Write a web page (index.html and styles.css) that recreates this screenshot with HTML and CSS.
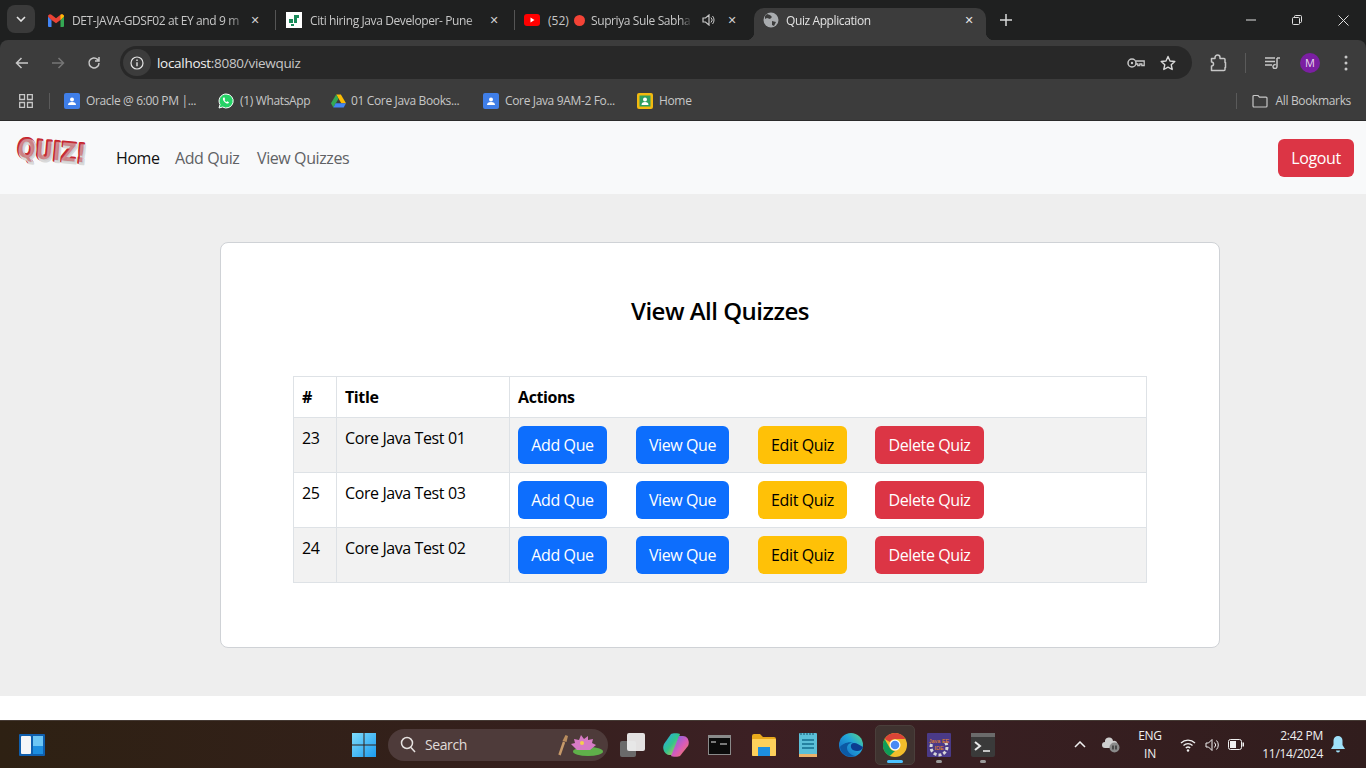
FILE: index.html
```html
<!DOCTYPE html>
<html lang="en">
<head>
<meta charset="utf-8">
<title>Quiz Application</title>
<link rel="stylesheet" href="styles.css">
</head>
<body>
<header class="browser">
  <div class="tabstrip">
    <button class="tab-search"><svg width="10" height="6" viewBox="0 0 10 6"><path d="M1 1l4 4 4-4" fill="none" stroke="#e3e3e3" stroke-width="1.6"/></svg></button>
    <div class="tab tab-a">
      <svg class="fav" width="16" height="13" viewBox="0 0 16 13"><path d="M0 2.500V12a1 1 0 0 0 1 1h2.500V6L0 2.500z" fill="#4285f4"/><path d="M16 2.500V12a1 1 0 0 1-1 1h-2.500V6L16 2.500z" fill="#34a853"/><path d="M0 2.500C0 .5 2 -.5 3.500 .7L8 4.200l4.500-3.500C14-.5 16 .5 16 2.500L12.500 6 8 9.300 3.500 6 0 2.500z" fill="#ea4335"/><path d="M12.500 .7C14-.5 16 .5 16 2.500L12.500 6V.7z" fill="#fbbc04"/></svg>
      <span class="tab-title">DET-JAVA-GDSF02 at EY and 9 m</span>
      <span class="tab-x">✕</span>
    </div>
    <i class="tab-sep"></i>
    <div class="tab tab-b">
      <svg class="fav" width="16" height="16" viewBox="0 0 16 16"><rect width="16" height="16" fill="#fff"/><path d="M3 7h4v4H3zM8 3h5v3h-2v5H8z" fill="#1a8a5a"/><path d="M5 12h3v2H5z" fill="#1a8a5a"/></svg>
      <span class="tab-title">Citi hiring Java Developer- Pune</span>
      <span class="tab-x">✕</span>
    </div>
    <i class="tab-sep"></i>
    <div class="tab tab-c">
      <svg class="fav" width="16" height="12" viewBox="0 0 16 12"><rect width="16" height="12" rx="3" fill="#f00"/><path d="M6.500 3.500v5l4-2.500z" fill="#fff"/></svg>
      <span class="tab-count">(52)</span>
      <i class="rec"></i>
      <span class="tab-title tab-title-c">Supriya Sule Sabha</span>
      <svg class="speaker" width="13" height="12" viewBox="0 0 13 12"><path d="M1 4v4h2.500L7 11V1L3.500 4z" fill="none" stroke="#c7c7c7" stroke-width="1.200"/><path d="M9 3.500a3.500 3.500 0 0 1 0 5M10.500 2a6 6 0 0 1 0 8" fill="none" stroke="#c7c7c7"/></svg>
      <span class="tab-x">✕</span>
    </div>
    <div class="tab tab-active">
      <svg class="fav fav-active" width="16" height="16" viewBox="0 0 16 16"><circle cx="8" cy="8" r="7.500" fill="#a9acaf"/><path d="M4 2l3 1 2 2-2 2-3-1-2 1V4zM9 9l4 1-2 4-2-1z" fill="#3c3c3c"/></svg>
      <span class="tab-title">Quiz Application</span>
      <span class="tab-x tab-x-active">✕</span>
    </div>
    <svg class="newtab" width="12" height="12" viewBox="0 0 12 12"><path d="M6 0v12M0 6h12" stroke="#d8d8d8" stroke-width="1.500"/></svg>
    <div class="winctl">
      <svg width="10" height="10" viewBox="0 0 10 10"><path d="M0 5h10" stroke="#e0e0e0"/></svg>
      <svg width="10" height="10" viewBox="0 0 10 10"><rect x=".5" y="2.500" width="7" height="7" rx="1" fill="none" stroke="#e0e0e0"/><path d="M2.500 2.500V1.500a1 1 0 0 1 1-1h5a1 1 0 0 1 1 1v5a1 1 0 0 1-1 1h-1" fill="none" stroke="#e0e0e0"/></svg>
      <svg width="11" height="11" viewBox="0 0 11 11"><path d="M.5 .5l10 10M10.500 .5l-10 10" stroke="#e0e0e0"/></svg>
    </div>
  </div>
  <div class="toolbar">
    <svg class="nav-ic" width="14" height="12" viewBox="0 0 14 12"><path d="M13 6H1.500M6.500 1l-5 5 5 5" fill="none" stroke="#c7c7c7" stroke-width="1.500"/></svg>
    <svg class="nav-ic" width="14" height="12" viewBox="0 0 14 12"><path d="M1 6h11.500M7.500 1l5 5-5 5" fill="none" stroke="#767676" stroke-width="1.500"/></svg>
    <svg class="nav-ic" width="14" height="14" viewBox="0 0 14 14"><path d="M12 7a5 5 0 1 1-1.500-3.600L12 5M12 1v4H8" fill="none" stroke="#c7c7c7" stroke-width="1.500"/></svg>
    <div class="omnibox">
      <span class="site-info"><svg width="14" height="14" viewBox="0 0 14 14"><circle cx="7" cy="7" r="6" fill="none" stroke="#e3e3e3" stroke-width="1.200"/><path d="M7 6.200v4M7 3.500v1.400" stroke="#e3e3e3" stroke-width="1.400"/></svg></span>
      <span class="url"><b>localhost</b>:8080/viewquiz</span>
      <svg class="omni-key" width="18" height="12" viewBox="0 0 18 12"><circle cx="5" cy="6" r="4" fill="none" stroke="#c7c7c7" stroke-width="1.500"/><circle cx="5" cy="6" r="1.200" fill="#c7c7c7"/><path d="M9 4h8.200v4.500h-2.400V7h-2v1.500h-2V7H9" fill="none" stroke="#c7c7c7" stroke-width="1.300"/></svg>
      <svg class="omni-star" width="16" height="16" viewBox="0 0 16 16"><path d="M8 1.500l2 4.500 4.800.5-3.600 3.200 1 4.800L8 12.100l-4.200 2.400 1-4.800L1.200 6.500 6 6z" fill="none" stroke="#d8d8d8" stroke-width="1.400" stroke-linejoin="round"/></svg>
    </div>
    <svg class="ext" width="17" height="18" viewBox="0 0 17 18"><path d="M1.500 4.500h3.500v-1a2.500 2.500 0 0 1 5 0v1h4a1 1 0 0 1 1 1v3h.5v5h-.5v2a1 1 0 0 1-1 1h-12.500v-4.500a2 2 0 0 0 0-4z" fill="none" stroke="#c7c7c7" stroke-width="1.500" stroke-linejoin="round"/></svg>
    <i class="tool-sep"></i>
    <svg class="media" width="16" height="12" viewBox="0 0 16 12"><path d="M0 1h10M0 4.500h10M0 8h7" stroke="#c7c7c7" stroke-width="1.300"/><path d="M12 1v8.500a2 2 0 1 1-1.300-1.800M12 1h3" fill="none" stroke="#c7c7c7" stroke-width="1.500"/></svg>
    <span class="avatar">M</span>
    <svg class="kebab" width="4" height="16" viewBox="0 0 4 16"><circle cx="2" cy="2" r="1.500" fill="#c7c7c7"/><circle cx="2" cy="8" r="1.500" fill="#c7c7c7"/><circle cx="2" cy="14" r="1.500" fill="#c7c7c7"/></svg>
  </div>
  <div class="bookmarks">
    <svg class="apps" width="14" height="14" viewBox="0 0 14 14"><path d="M.7 .7h4.800v4.800H.7zM8.500 .7h4.800v4.800H8.500zM.7 8.500h4.800v4.800H.7zM8.500 8.500h4.800v4.800H8.500z" fill="none" stroke="#c7c7c7" stroke-width="1.300"/></svg>
    <i class="bm-sep"></i>
    <span class="bm bm-1"><svg width="16" height="16" viewBox="0 0 16 16"><rect width="16" height="16" rx="2" fill="#3f7ee8"/><circle cx="8" cy="6.500" r="2" fill="#fff"/><path d="M4 12a4 3 0 0 1 8 0z" fill="#fff"/></svg>Oracle @ 6:00 PM |...</span>
    <span class="bm bm-2"><svg width="16" height="16" viewBox="0 0 16 16"><path d="M8 1a7 7 0 0 0-6 10.500L1 15l3.600-1A7 7 0 1 0 8 1z" fill="#25d366" stroke="#fff"/><path d="M5.500 4.500c-1 1-.8 2.500.8 4.300s3.300 2.300 4.300 1.300l.4-.9-1.800-1-.7.700c-.8-.3-1.700-1.200-2-2l.7-.7-.9-1.900z" fill="#fff"/></svg>(1) WhatsApp</span>
    <span class="bm bm-3"><svg width="15" height="14" viewBox="0 0 16 14"><path d="M5.500 0h5L16 9.500h-5z" fill="#fbbc04"/><path d="M5.500 0L0 9.500 2.500 14 8 4.500z" fill="#34a853"/><path d="M2.500 14h11L16 9.500H5z" fill="#4285f4"/></svg>01 Core Java Books...</span>
    <span class="bm bm-4"><svg width="16" height="16" viewBox="0 0 16 16"><rect width="16" height="16" rx="2" fill="#3f7ee8"/><circle cx="8" cy="6.500" r="2" fill="#fff"/><path d="M4 12a4 3 0 0 1 8 0z" fill="#fff"/></svg>Core Java 9AM-2 Fo...</span>
    <span class="bm bm-5"><svg width="16" height="16" viewBox="0 0 16 16"><rect width="16" height="16" rx="2" fill="#f2b90f"/><rect x="2.500" y="2.500" width="11" height="11" fill="#2f9e5f"/><circle cx="8" cy="6.500" r="2" fill="#fff"/><path d="M4.500 12a3.500 3 0 0 1 7 0z" fill="#fff"/></svg>Home</span>
    <i class="bm-sep bm-sep-r"></i>
    <span class="bm bm-all"><svg width="16" height="14" viewBox="0 0 16 14"><path d="M1 2.500a1 1 0 0 1 1-1h4l1.500 1.700H14a1 1 0 0 1 1 1V12a1 1 0 0 1-1 1H2a1 1 0 0 1-1-1z" fill="none" stroke="#c7c7c7" stroke-width="1.200"/></svg>All Bookmarks</span>
  </div>
</header>

<nav class="navbar">
  <svg class="logo" width="76" height="32" viewBox="0 0 76 32">
    <g transform="rotate(5 38 16)">
      <text class="logo-red" x="3" y="24" textLength="69" lengthAdjust="spacingAndGlyphs">QUIZ!</text>
      <text class="logo-face" x="4.500" y="25.500" textLength="69" lengthAdjust="spacingAndGlyphs">QUIZ!</text>
      <text class="logo-front" x="3" y="23.500" textLength="69" lengthAdjust="spacingAndGlyphs">QUIZ!</text>
    </g>
  </svg>
  <ul class="nav-links">
    <li class="active l-home">Home</li>
    <li class="l-add">Add Quiz</li>
    <li class="l-view">View Quizzes</li>
  </ul>
  <button class="btn btn-danger btn-logout">Logout</button>
</nav>

<main class="content">
  <section class="card">
    <h1 class="card-title">View All Quizzes</h1>
    <table class="quiz-table">
      <thead>
        <tr><th class="col-id">#</th><th class="col-title">Title</th><th>Actions</th></tr>
      </thead>
      <tbody>
        <tr>
          <td>23</td><td>Core Java Test 01</td>
          <td><div class="actions"><button class="btn btn-primary b-add">Add Que</button><button class="btn btn-primary b-view">View Que</button><button class="btn btn-warning b-edit">Edit Quiz</button><button class="btn btn-danger b-del">Delete Quiz</button></div></td>
        </tr>
        <tr>
          <td>25</td><td>Core Java Test 03</td>
          <td><div class="actions"><button class="btn btn-primary b-add">Add Que</button><button class="btn btn-primary b-view">View Que</button><button class="btn btn-warning b-edit">Edit Quiz</button><button class="btn btn-danger b-del">Delete Quiz</button></div></td>
        </tr>
        <tr>
          <td>24</td><td>Core Java Test 02</td>
          <td><div class="actions"><button class="btn btn-primary b-add">Add Que</button><button class="btn btn-primary b-view">View Que</button><button class="btn btn-warning b-edit">Edit Quiz</button><button class="btn btn-danger b-del">Delete Quiz</button></div></td>
        </tr>
      </tbody>
    </table>
  </section>
</main>
<div class="page-foot"></div>

<footer class="taskbar">
  <svg class="widgets" width="26" height="22" viewBox="0 0 26 22"><rect width="26" height="22" rx="1" fill="#0f5fae"/><rect x="2" y="2" width="10" height="18" rx="1" fill="#f4f6f8"/><rect x="14" y="2" width="10" height="18" fill="#6cc6f5"/><rect x="14" y="12" width="10" height="8" fill="#1c8ee0"/></svg>
  <div class="task-center">
    <svg class="start" width="24" height="24" viewBox="0 0 24 24"><defs><linearGradient id="win" x1="0" y1="0" x2="1" y2="1"><stop offset="0" stop-color="#7fdcfb"/><stop offset="1" stop-color="#1a9bf0"/></linearGradient></defs><path d="M0 0h11.500v11.500H0zM12.500 0H24v11.500H12.500zM0 12.500h11.500V24H0zM12.500 12.500H24V24H12.500z" fill="url(#win)"/></svg>
    <div class="searchbox">
      <svg width="16" height="17" viewBox="0 0 16 17"><circle cx="7" cy="7" r="5.500" fill="none" stroke="#e6e2e0" stroke-width="1.500"/><path d="M11 11.500l4 4.500" stroke="#e6e2e0" stroke-width="1.500"/></svg>
      <span class="search-text">Search</span>
      <svg class="lotus" width="46" height="24" viewBox="0 0 46 24"><path d="M1.500 22L6 9" stroke="#c79a6a" stroke-width="2.500"/><path d="M4.500 8l3-6 2.500 1-1.500 6z" fill="#b98d5e"/><ellipse cx="30" cy="18.500" rx="15" ry="4.500" fill="#5fb04a"/><path d="M19 17l-6-6 4-1-1-4 5 1 2-5 3 4 4-3v4l5-1-1 4 4 2-6 5z" fill="#d77bc5"/><circle cx="24" cy="10" r="2" fill="#f4cf4d"/></svg>
    </div>
    <svg class="ti-taskview" width="26" height="24" viewBox="0 0 26 24"><rect x="0" y="8" width="16" height="16" rx="2" fill="#6a6a6a"/><rect x="7" y="0" width="18" height="18" rx="2" fill="#f2f2f2" fill-opacity=".92"/></svg>
    <svg class="ti-copilot" width="26" height="24" viewBox="0 0 26 24"><defs><linearGradient id="cp1" x1="0" y1="0" x2="1" y2="1"><stop offset="0" stop-color="#2aa4f0"/><stop offset=".5" stop-color="#31c48d"/><stop offset="1" stop-color="#f6c23e"/></linearGradient><linearGradient id="cp2" x1="0" y1="0" x2="1" y2="1"><stop offset="0" stop-color="#5b6af0"/><stop offset=".55" stop-color="#d95bb8"/><stop offset="1" stop-color="#f4824b"/></linearGradient></defs><path d="M8 1c1-1 8-1 9 0l-7 21H6C1 21-1 15 1 11z" fill="url(#cp1)"/><path d="M17 23c-1 1-8 1-9 0l8-20h4c5 0 7 6 5 10z" fill="url(#cp2)"/></svg>
    <svg class="ti-cmd" width="23" height="20" viewBox="0 0 23 20"><rect x=".5" y=".5" width="22" height="19" fill="#0b0b0b" stroke="#8a8a8a"/><path d="M0 0h23v3H0z" fill="#8a8a8a"/><path d="M3 7h5M12 9h7" stroke="#e8e8e8"/></svg>
    <svg class="ti-folder" width="24" height="22" viewBox="0 0 24 22"><path d="M0 2a2 2 0 0 1 2-2h6l3 3h11a2 2 0 0 1 2 2v15a2 2 0 0 1-2 2H2a2 2 0 0 1-2-2z" fill="#e8a91c"/><rect y="5" width="24" height="17" rx="1" fill="#fdd05b"/><rect x="6" y="13" width="12" height="9" fill="#1d8fe0"/></svg>
    <svg class="ti-notepad" width="18" height="24" viewBox="0 0 18 24"><rect width="18" height="24" rx="1" fill="#5bbfd8"/><rect y="21" width="18" height="3" fill="#e9b16b"/><path d="M3 7h12M3 11h12M3 15h12" stroke="#156f8f" stroke-width="1.600"/><path d="M2 0v2M5 0v2M8 0v2M11 0v2M14 0v2" stroke="#14556e"/></svg>
    <svg class="ti-edge" width="24" height="24" viewBox="0 0 24 24"><defs><linearGradient id="ed" x1="0" y1="1" x2="1" y2="0"><stop offset="0" stop-color="#0f5fc2"/><stop offset=".6" stop-color="#22a6d8"/><stop offset="1" stop-color="#5fd97c"/></linearGradient></defs><circle cx="12" cy="12" r="12" fill="url(#ed)"/><path d="M24 14c-1 4-6 5-10 3-3-2-3-7 1-7 3 0 5 2 9 4z" fill="#0b3d91"/><path d="M15 10c-4-1-7 2-7 5s3 7 8 8c-6 2-14-1-15-9 2-3 9-6 14-4z" fill="#0c59a4"/></svg>
    <div class="ti-chrome-wrap">
      <svg width="24" height="24" viewBox="0 0 24 24"><circle cx="12" cy="12" r="12" fill="#f2bd2b"/><path d="M12 0a12 12 0 0 1 10.400 6H12a6 6 0 0 0-5.200 3L1.600 6A12 12 0 0 1 12 0z" fill="#db4437"/><path d="M1.600 6l5.200 9a6 6 0 0 0 5.200 3l-5.200 5A12 12 0 0 1 1.600 6z" fill="#0f9d58"/><circle cx="12" cy="12" r="5.500" fill="#fff"/><circle cx="12" cy="12" r="4.300" fill="#4a8af4"/></svg>
      <i class="run run-active"></i>
    </div>
    <div class="ti-running ti-java">
      <svg width="24" height="24" viewBox="0 0 24 24"><rect width="24" height="24" rx="1" fill="#4a3a88"/><circle cx="12" cy="14" r="8" fill="none" stroke="#d8d8d8" stroke-width="3" stroke-dasharray="3 2"/><rect x="2" y="4" width="20" height="6" fill="#4a3a88"/><rect x="7" y="12" width="10" height="5" fill="#4a3a88"/><text class="java-t" x="12" y="9.500">Java EE</text><text class="java-t" x="12" y="16.500">IDE</text></svg>
      <i class="run"></i>
    </div>
    <div class="ti-running ti-term">
      <svg width="24" height="24" viewBox="0 0 24 24"><rect width="24" height="24" rx="2" fill="#3a3a3a"/><rect width="24" height="4" fill="#6b6b6b"/><path d="M4 9l5 4-5 4" fill="none" stroke="#e8e8e8" stroke-width="2"/><path d="M12 18h7" stroke="#e8e8e8" stroke-width="1.600"/></svg>
      <i class="run"></i>
    </div>
  </div>
  <div class="tray">
    <svg class="tray-chev" width="12" height="7" viewBox="0 0 12 7"><path d="M1 6l5-5 5 5" fill="none" stroke="#f0f0f0" stroke-width="1.500"/></svg>
    <svg class="tray-cloud" width="18" height="16" viewBox="0 0 18 16"><path d="M3 11a3 3 0 0 1 0-6 4 4 0 0 1 8-1 3.500 3.500 0 0 1 2 7z" fill="#cfcfcf"/><circle cx="12.500" cy="10.500" r="5" fill="#8a8a8a"/><path d="M11 8.500v4M14 8.500v4" stroke="#222" stroke-width="1.200"/></svg>
    <div class="lang"><span>ENG</span><span>IN</span></div>
    <svg class="tray-wifi" width="16" height="14" viewBox="0 0 16 14"><path d="M1 5a10 10 0 0 1 14 0M3.500 7.500a6.500 6.500 0 0 1 9 0M5.800 10a3.300 3.300 0 0 1 4.400 0" fill="none" stroke="#f0f0f0" stroke-width="1.300"/><circle cx="8" cy="12.500" r="1.200" fill="#f0f0f0"/></svg>
    <svg class="tray-vol" width="16" height="14" viewBox="0 0 16 14"><path d="M1 5v4h2.500L7 12.500v-11L3.500 5z" fill="none" stroke="#f0f0f0"/><path d="M9.500 4.500a3.500 3.500 0 0 1 0 5M11.500 2.500a6.500 6.500 0 0 1 0 9" fill="none" stroke="#f0f0f0"/></svg>
    <svg class="tray-batt" width="16" height="11" viewBox="0 0 16 11"><rect x=".5" y=".5" width="13" height="10" rx="2" fill="none" stroke="#f0f0f0"/><rect x="2" y="2" width="6" height="7" fill="#f0f0f0"/><rect x="14.500" y="3.500" width="1.500" height="4" fill="#f0f0f0"/></svg>
    <div class="clock"><span>2:42 PM</span><span>11/14/2024</span></div>
    <svg class="tray-bell" width="14" height="17" viewBox="0 0 14 17"><path d="M7 0a4.500 4.500 0 0 0-4.500 4.500V9L0 13h14l-2.500-4V4.500A4.500 4.500 0 0 0 7 0z" fill="#9fe0f9"/><path d="M5 14.500a2 2 0 0 0 4 0z" fill="#9fe0f9"/></svg>
  </div>
</footer>
</body>
</html>
```

FILE: styles.css
```css
* { box-sizing: border-box; }
html, body { margin: 0; padding: 0; }
body {
  width: 1366px;
  height: 768px;
  overflow: hidden;
  display: flex;
  flex-direction: column;
  background: #fff;
  font-family: "Open Sans", "Noto Sans", sans-serif;
}
svg { display: block; flex: none; }
i { display: block; }

/* browser chrome */
.browser { height: 121px; background: #1f2020; color: #c7c7c7; font-size: 12px; border-bottom: 1px solid #2b2b2b; }
.tabstrip { height: 40px; display: flex; align-items: center; padding-left: 7px; }
.tab-search { width: 28px; height: 28px; margin-top: -2px; border: 0; border-radius: 8px; background: #3a3a3a; display: flex; align-items: center; justify-content: center; padding: 0; }
.tab { display: flex; align-items: center; height: 32px; white-space: nowrap; }
.tab-title { overflow: hidden; flex: 1; letter-spacing: -.4px; -webkit-mask-image: linear-gradient(to right, #000 88%, transparent); mask-image: linear-gradient(to right, #000 88%, transparent); }
.tab-x { font-size: 11px; width: 12px; color: #cfcfcf; text-align: center; flex: none; font-family: "DejaVu Sans", sans-serif; }
.fav { margin-right: 8px; }
.tab-a { width: 227px; margin-left: 13px; padding-right: 14px; }
.tab-b { width: 238px; padding-left: 10px; padding-right: 14px; }
.tab-c { width: 239px; padding-left: 9px; }
.tab-sep { width: 1px; height: 20px; background: #555; flex: none; }
.tab-count { flex: none; width: 26px; }
.rec { width: 11px; height: 11px; border-radius: 50%; background: #f44336; margin-right: 6px; flex: none; }
.tab-title-c { flex: none; width: 101px; }
.speaker { margin-left: 10px; margin-right: 11px; }
.tab-active { width: 232px; align-self: flex-end; padding: 0 11px 8px 9px; background: #3c3c3c; border-radius: 10px 10px 0 0; color: #e3e3e3; position: relative; }
.tab-active::before, .tab-active::after { content: ""; position: absolute; bottom: 0; width: 8px; height: 8px; }
.tab-active::before { left: -8px; background: radial-gradient(circle at 0 0, transparent 8px, #3c3c3c 8.500px); }
.tab-active::after { right: -8px; background: radial-gradient(circle at 100% 0, transparent 8px, #3c3c3c 8.500px); }
.fav-active { margin-right: 7px; }
.tab-x-active { color: #e3e3e3; }
.newtab { margin-left: 14px; }
.winctl { margin-left: auto; display: flex; align-items: center; gap: 36px; padding-right: 17px; }

.toolbar { height: 41px; display: flex; align-items: center; padding: 4px 0 0 15px; border-radius: 8px 8px 0 0; background: #3c3c3c; }
.nav-ic { margin-right: 22px; }
.nav-ic:nth-child(3) { margin-right: 19px; }
.omnibox { width: 1072px; height: 33px; background: #282828; border-radius: 17px; display: flex; align-items: center; padding-left: 3px; }
.site-info { width: 28px; height: 27px; border-radius: 14px; background: #3c3c3c; display: flex; align-items: center; justify-content: center; margin-right: 6px; }
.url { flex: 1; font-size: 13.500px; color: #c7c7c7; letter-spacing: -.3px; }
.url b { font-weight: 400; color: #f0f0f0; }
.omni-key { margin-right: 15px; }
.omni-star { margin-right: 16px; }
.ext { margin-left: 18px; }
.tool-sep { width: 1px; height: 20px; background: #5a5a5a; margin-left: 18px; }
.media { margin-left: 19px; }
.avatar { width: 20px; height: 20px; margin-left: 19px; border-radius: 50%; background: #7b1fa2; color: #e8d9ee; font-size: 11px; display: flex; align-items: center; justify-content: center; }
.kebab { margin-left: 24px; }

.bookmarks { height: 39px; display: flex; align-items: center; padding-left: 19px; white-space: nowrap; background: #3c3c3c; }
.bm-sep { width: 1px; height: 16px; background: #5a5a5a; margin-left: 16px; }
.bm { display: flex; align-items: center; gap: 6px; letter-spacing: -.35px; }
.bm-1 { margin-left: 14px; width: 154px; }
.bm-2 { width: 113px; }
.bm-3 { width: 152px; gap: 5px; }
.bm-4 { width: 154px; }
.bm-5 { width: 56px; }
.bm-sep-r { margin-left: auto; }
.bm-all { margin-left: 15px; padding-right: 15px; gap: 8px; }

/* app navbar */
.navbar { height: 73px; background: #f8f9fa; display: flex; align-items: center; padding: 0 12px 0 14px; flex: none; font-size: 16px; }
.logo { margin-top: -11px; overflow: visible; }
.logo-red, .logo-face, .logo-front { font-family: "DejaVu Sans", sans-serif; font-weight: 700; font-size: 26px; }
.logo-red { fill: #c4222b; stroke: #c4222b; stroke-width: 3; stroke-linejoin: round; }
.logo-face { fill: #c9c9c9; stroke: #d9d9d9; stroke-width: 2; stroke-linejoin: round; }
.logo-front { fill: #c9464c; stroke: none; fill-opacity: .55; }
.nav-links { list-style: none; margin: 0 0 0 26px; padding: 0; display: flex; color: #5f6265; letter-spacing: -.4px; }
.nav-links li { white-space: nowrap; }
.l-home { width: 59px; }
.l-add { width: 82px; }
.active { color: #111; }
.btn { height: 38px; border: 0; border-radius: 6px; font: inherit; font-size: 16px; letter-spacing: -.4px; padding: 0; white-space: nowrap; flex: none; }
.btn-primary { background: #0d6efd; color: #fff; }
.btn-danger { background: #dc3545; color: #fff; }
.btn-warning { background: #ffc107; color: #000; }
.btn-logout { margin-left: auto; width: 76px; }

/* content */
.content { height: 502px; background: #eee; display: flex; justify-content: flex-start; align-items: flex-start; padding: 48px 0 0 220px; flex: none; }
.card { width: 1000px; height: 406px; background: #fff; border: 1px solid #cfd2d6; border-radius: 8px; padding: 0 72px; }
.card-title { margin: 50px 0 47px; height: 36px; font-size: 24px; line-height: 36px; font-weight: 600; text-align: center; color: #000; letter-spacing: -.5px; }
.quiz-table { width: 854px; border-collapse: collapse; table-layout: fixed; font-size: 16px; color: #000; letter-spacing: -.4px; }
.quiz-table th, .quiz-table td { border: 1px solid #dee2e6; padding: 8px; text-align: left; vertical-align: top; }
.quiz-table th { font-weight: 700; height: 41px; line-height: 24px; }
.quiz-table td { height: 55px; line-height: 24px; padding-bottom: 8px; }
.quiz-table tbody tr:nth-child(odd) td { background: #f2f2f2; }
.col-id { width: 43px; }
.col-title { width: 173px; }
.actions { display: flex; gap: 29px; }
.b-add { width: 89px; }
.b-view { width: 93px; }
.b-edit { width: 89px; }
.b-del { width: 109px; margin-left: -1px; }

.page-foot { height: 24px; background: #fff; flex: none; }

/* taskbar */
.taskbar { height: 48px; flex: none; background: linear-gradient(90deg, #2e2113 0%, #33201a 30%, #3c2024 55%, #311d1d 100%); border-top: 1px solid #453a34; display: flex; align-items: center; padding-left: 19px; color: #f0f0f0; }
.task-center { display: flex; align-items: center; margin-left: 307px; }
.start { margin-right: 12px; }
.searchbox { width: 220px; height: 32px; background: #4e3b3a; border-radius: 16px; display: flex; align-items: center; padding-left: 12px; }
.search-text { flex: 1; margin-left: 9px; font-size: 14px; color: #e0dbd9; letter-spacing: -.4px; }
.lotus { margin-right: 4px; }
.ti-taskview { margin-left: 12px; }
.ti-copilot { margin-left: 17px; }
.ti-cmd { margin-left: 19px; }
.ti-folder { margin-left: 21px; }
.ti-notepad { margin-left: 23px; }
.ti-edge { margin-left: 22px; }
.ti-chrome-wrap { width: 40px; height: 40px; margin-left: 12px; background: #3f3330; border: 1px solid #4a3f3b; border-radius: 5px; display: flex; flex-direction: column; align-items: center; padding-top: 7px; gap: 3px; }
.ti-running { width: 24px; margin-left: 20px; display: flex; flex-direction: column; align-items: center; gap: 3px; padding-top: 6px; }
.ti-chrome-wrap + .ti-running { margin-left: 12px; }
.run { width: 6px; height: 3px; border-radius: 2px; background: #9a9a9a; }
.run-active { width: 16px; background: #4cc2ff; }
.java-t { font-family: "Liberation Sans", sans-serif; font-size: 5.500px; fill: #f08a24; text-anchor: middle; }
.tray { margin-left: auto; display: flex; align-items: center; font-size: 12px; }
.tray-chev { margin-right: 16px; }
.tray-cloud { margin-right: 10px; }
.lang, .clock { display: flex; flex-direction: column; align-items: center; line-height: 18px; letter-spacing: -.3px; }
.lang { width: 40px; margin-right: 10px; }
.tray-wifi { margin-right: 9px; }
.tray-vol { margin-right: 7px; }
.tray-batt { margin-right: 13px; }
.clock { align-items: flex-end; width: 66px; margin-right: 8px; }
.tray-bell { margin-right: 21px; }
```
